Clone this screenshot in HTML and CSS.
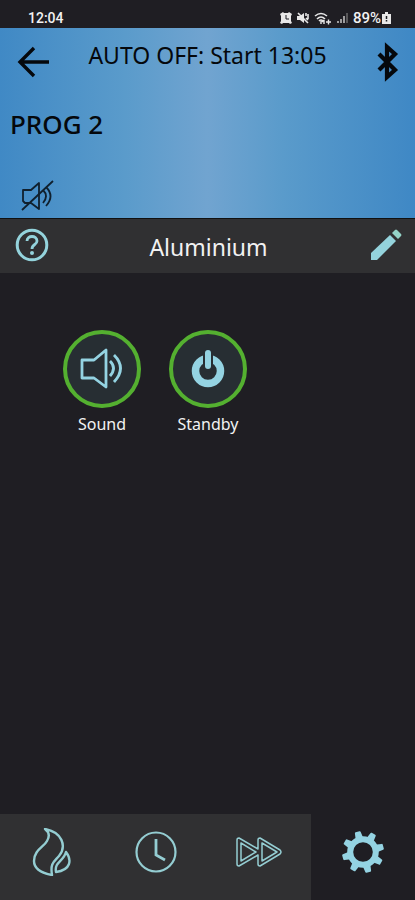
FILE: index.html
```html
<!DOCTYPE html>
<html lang="en">
<head>
    <meta charset="UTF-8">
    <meta name="viewport" content="width=device-width, initial-scale=1.0">
    <title>Aluminium - Settings</title>
    <link rel="stylesheet" href="styles.css">
</head>
<body>

<div class="status-bar">
    <span class="time">12:04</span>
    <div class="status-icons">
        <svg width="12" height="12" viewBox="0 0 12 12">
            <path d="M0 2l3-2 1 1h4l1-1 3 2-1 2v5l1 2-2 1-1-1H3l-1 1-2-1 1-2V4z" fill="#e8e8e8"/>
            <path d="M6 3v4h3" fill="none" stroke="#1d1d22"/>
        </svg>
        <svg width="12" height="12" viewBox="0 0 12 12">
            <path d="M0 4h3l4-3v10L3 8H0z" fill="#e8e8e8"/>
            <path d="M1 1l10 10M9 1v3M11 2v5M9 6l2 2" fill="none" stroke="#e8e8e8" stroke-width="1.6"/>
        </svg>
        <svg class="wifi" width="18" height="13" viewBox="0 0 18 13">
            <path d="M1 4q6-5 12 0M3 7q4-4 8 0M5 9q2-2 4 0" fill="none" stroke="#e8e8e8" stroke-width="1.6"/>
            <path d="M7 9v3M10 8v4M8 10l2-2M12 10h5M14.500 7.500v5" fill="none" stroke="#e8e8e8" stroke-width="1.4"/>
        </svg>
        <svg width="11" height="12" viewBox="0 0 11 12">
            <path d="M1 9v2M4 7v4M7 4v7" stroke="#bdbdbd" stroke-width="1.6"/>
            <path d="M10 1v10" stroke="#777" stroke-width="1.3"/>
        </svg>
        <span class="battery">89%</span>
        <svg width="9" height="12" viewBox="0 0 9 12">
            <path d="M0 2h3V0h3v2h3v10H0z" fill="#e8e8e8"/>
            <path d="M4.500 4v3M4.500 8v1.500" stroke="#1d1d22" stroke-width="1.500"/>
        </svg>
    </div>
</div>

<header class="header">
    <div class="header-top">
        <button type="button" class="icon-btn" aria-label="Back">
            <svg width="34" height="34" viewBox="0 0 34 34">
                <path d="M18 3L4 17l14 14M4 17h29" fill="none" stroke="#05080c" stroke-width="3.400"/>
            </svg>
        </button>
        <div class="auto-off">AUTO OFF: Start 13:05</div>
        <button type="button" class="icon-btn" aria-label="Bluetooth">
            <svg width="24" height="42" viewBox="0 0 24 42">
                <path d="M4 13l16 16-8 7V6l8 7L4 29" fill="none" stroke="#05080c" stroke-width="4.200"/>
            </svg>
        </button>
    </div>
    <div class="program">PROG 2</div>
    <svg class="muted" width="34" height="32" viewBox="0 0 34 32">
        <path d="M2 10h8l8-7v26l-8-6H4l-2-2z" fill="none" stroke="#10202e" stroke-width="1.800" stroke-linejoin="round"/>
        <path d="M22 10q6 6 0 13M25 7q9 9 0 19M1 30L32 1" fill="none" stroke="#10202e" stroke-width="1.800"/>
    </svg>
</header>

<div class="title-bar">
    <button type="button" class="icon-btn" aria-label="Help">
        <svg width="34" height="34" viewBox="0 0 34 34">
            <circle cx="17" cy="17" r="14.800" fill="none" stroke="#94d3dc" stroke-width="3"/>
            <path d="M12 13c0-6 10-6 10 0 0 4-5 3-5 8" fill="none" stroke="#94d3dc" stroke-width="2.800"/>
            <circle cx="17" cy="25" r="2" fill="#94d3dc"/>
        </svg>
    </button>
    <h1>Aluminium</h1>
    <button type="button" class="icon-btn" aria-label="Edit">
        <svg width="32" height="32" viewBox="0 0 32 32">
            <path d="M1 31v-7L20 6l6 6L7 31z" fill="#94d3dc"/>
            <path d="M22 4l3-3q1-1 2 0l4 4q1 1 0 2l-3 3z" fill="#94d3c8"/>
        </svg>
    </button>
</div>

<main class="options">
    <button type="button" class="option">
        <span class="circle">
            <svg width="44" height="42" viewBox="0 0 44 42">
                <path d="M2 12h12L26 2v37L14 30H2z" fill="none" stroke="#94d3e2" stroke-width="2.800" stroke-linejoin="round"/>
                <path d="M30 13q7 7 0 15M34 7q13 13 0 27" fill="none" stroke="#94d3e2" stroke-width="2.800"/>
            </svg>
        </span>
        Sound
    </button>
    <button type="button" class="option">
        <span class="circle">
            <svg width="36" height="40" viewBox="0 0 36 40">
                <circle cx="18" cy="22" r="12.500" fill="none" stroke="#94d3e2" stroke-width="7.500"/>
                <path d="M18 5v13" stroke="#272e33" stroke-width="10" stroke-linecap="round"/>
                <path d="M18 4v13" stroke="#94d3e2" stroke-width="6" stroke-linecap="round"/>
            </svg>
        </span>
        Standby
    </button>
</main>

<nav class="nav">
    <a href="#" aria-label="Heating">
        <svg width="40" height="48" viewBox="0 0 40 48">
            <path d="M13 1c4 3 5 7 2 12C12 19 2 22 2 33c0 8 7 12 18 14-2-12 2-13 7-19C35 18 30 4 13 1z" fill="none" stroke="#94cdd2" stroke-width="2.400" stroke-linejoin="round"/>
            <path d="M34 24c6 8 5 18-10 20-2-10 8-11 10-20z" fill="none" stroke="#94cdd2" stroke-width="2.400" stroke-linejoin="round"/>
        </svg>
    </a>
    <a href="#" aria-label="Timer">
        <svg width="42" height="42" viewBox="0 0 42 42">
            <circle cx="21" cy="21" r="19.500" fill="none" stroke="#94cdd2" stroke-width="2.200"/>
            <path d="M21 8v16l9 5" fill="none" stroke="#94cdd2" stroke-width="2.800"/>
        </svg>
    </a>
    <a href="#" aria-label="Fast forward">
        <svg width="46" height="30" viewBox="0 0 46 30">
            <g fill="none" stroke="#94cdd2" stroke-width="1.500" stroke-linejoin="round">
                <path d="M3 1q-2 0-2 2v24q0 2 2 2l19-11v9q0 2 2 2l20-12q2-2 0-4L24 1q-2 0-2 2v9z"/>
                <path d="M5 6v18l15-9zM26 6v18l15-9z"/>
            </g>
        </svg>
    </a>
    <a href="#" class="active" aria-label="Settings">
        <svg width="44" height="44" viewBox="-22 -22 44 44">
            <circle r="12.800" fill="none" stroke="#94d3e2" stroke-width="6"/>
            <g fill="#94d3e2" transform="rotate(-15)">
                <path id="tooth" d="M-4-13l1-7q0-1 1-1h4q1 0 1 1l1 7z"/>
                <use href="#tooth" transform="rotate(45)"/>
                <use href="#tooth" transform="rotate(90)"/>
                <use href="#tooth" transform="rotate(135)"/>
                <use href="#tooth" transform="rotate(180)"/>
                <use href="#tooth" transform="rotate(225)"/>
                <use href="#tooth" transform="rotate(270)"/>
                <use href="#tooth" transform="rotate(315)"/>
            </g>
        </svg>
    </a>
</nav>

</body>
</html>
```
FILE: styles.css
```css
* {
    box-sizing: border-box;
}
body {
    font-family: "Noto Sans", "Open Sans", sans-serif;
    background-color: #1f1e23;
    color: #f2f2f2;
    margin: 0;
    min-height: 100vh;
    display: flex;
    flex-direction: column;
}
svg {
    display: block;
}
.status-bar {
    display: flex;
    justify-content: space-between;
    align-items: center;
    height: 28px;
    padding: 8px 24px 0 28px;
    font-family: Roboto, sans-serif;
    font-size: 14px;
    font-weight: 500;
    line-height: 20px;
}
.status-icons {
    display: flex;
    align-items: center;
    gap: 5px;
}
.battery {
    margin-right: -4px;
    font-size: 15px;
}
.icon-btn {
    background: none;
    border: none;
    padding: 0;
    cursor: pointer;
}
.icon-btn:first-child {
    justify-self: start;
}
.icon-btn:last-child {
    justify-self: end;
}
.header {
    height: 191px;
    padding: 12px 16px 0;
    background: linear-gradient(to right, #4089c5, #5a9bcb 30%, #71a4d0 50%, #5a9bcb 68%, #3f88c5);
    border-bottom: 1px solid #111;
    color: #05080c;
}
.header-top {
    display: grid;
    grid-template-columns: 40px 1fr 40px;
    height: 44px;
}
.auto-off {
    font-size: 23px;
    line-height: 30px;
    text-align: center;
}
.program {
    margin: 24px -6px 0;
    font-size: 26px;
    font-weight: 500;
    line-height: 32px;
}
.muted {
    margin: 40px 0 0 5px;
}
.title-bar {
    display: grid;
    grid-template-columns: 40px 1fr 40px;
    align-items: center;
    height: 54px;
    padding: 0 13px 2px 15px;
    background-color: #303032;
}
h1 {
    margin: 0;
    padding-top: 4px;
    font-size: 23px;
    font-weight: 400;
    line-height: 32px;
    text-align: center;
}
.options {
    flex: 1;
    display: flex;
    align-items: flex-start;
    gap: 28px;
    padding: 57px 63px;
}
.option {
    display: flex;
    flex-direction: column;
    align-items: center;
    gap: 4px;
    width: 78px;
    padding: 0;
    background: none;
    border: none;
    color: #f2f2f2;
    font-family: inherit;
    font-size: 16px;
    font-weight: 400;
    line-height: 24px;
    cursor: pointer;
}
.circle {
    display: flex;
    justify-content: center;
    align-items: center;
    width: 78px;
    height: 78px;
    border: 4px solid #54b030;
    border-radius: 50%;
    background-color: #272e33;
}
.nav {
    display: grid;
    grid-template-columns: repeat(4, 1fr);
    height: 86px;
}
.nav a {
    display: flex;
    justify-content: center;
    align-items: center;
    padding-bottom: 10px;
    background-color: #303032;
}
.nav .active {
    background-color: #1f1e23;
}
```
